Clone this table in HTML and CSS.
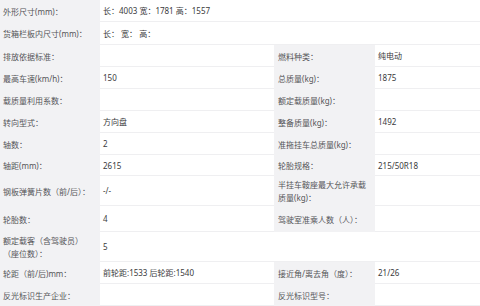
FILE: index.html
```html
<!DOCTYPE html>
<html lang="zh-CN">
<head>
<meta charset="utf-8">
<link rel="stylesheet" href="styles.css">
</head>
<body>
<div class="spec">
  <div class="lbl">外形尺寸(mm)：</div>
  <div class="val span3">长：4003 宽：1781 高：1557</div>

  <div class="lbl">货箱栏板内尺寸(mm)：</div>
  <div class="val span3">长：&nbsp;宽：&nbsp;高：</div>

  <div class="lbl">排放依据标准：</div>
  <div class="val"></div>
  <div class="lbl lbl-r">燃料种类：</div>
  <div class="val">纯电动</div>

  <div class="lbl">最高车速(km/h)：</div>
  <div class="val">150</div>
  <div class="lbl lbl-r">总质量(kg)：</div>
  <div class="val">1875</div>

  <div class="lbl">载质量利用系数：</div>
  <div class="val"></div>
  <div class="lbl lbl-r">额定载质量(kg)：</div>
  <div class="val"></div>

  <div class="lbl">转向型式：</div>
  <div class="val">方向盘</div>
  <div class="lbl lbl-r">整备质量(kg)：</div>
  <div class="val">1492</div>

  <div class="lbl">轴数：</div>
  <div class="val">2</div>
  <div class="lbl lbl-r">准拖挂车总质量(kg)：</div>
  <div class="val"></div>

  <div class="lbl">轴距(mm)：</div>
  <div class="val">2615</div>
  <div class="lbl lbl-r">轮胎规格：</div>
  <div class="val">215/50R18</div>

  <div class="lbl">钢板弹簧片数（前/后）：</div>
  <div class="val">-/-</div>
  <div class="lbl lbl-r">半挂车鞍座最大允许承载<br>质量(kg)：</div>
  <div class="val"></div>

  <div class="lbl">轮胎数：</div>
  <div class="val">4</div>
  <div class="lbl lbl-r">驾驶室准乘人数（人）：</div>
  <div class="val"></div>

  <div class="lbl">额定载客（含驾驶员）<br>（座位数）：</div>
  <div class="val">5</div>
  <div class="val span2"></div>

  <div class="lbl">轮距（前/后)mm：</div>
  <div class="val">前轮距:1533 后轮距:1540</div>
  <div class="lbl lbl-r">接近角/离去角（度）：</div>
  <div class="val">21/26</div>

  <div class="lbl">反光标识生产企业：</div>
  <div class="val"></div>
  <div class="lbl lbl-r">反光标识型号：</div>
  <div class="val"></div>
</div>
</body>
</html>
```

FILE: styles.css
```css
html, body {
  margin: 0;
  padding: 0;
  background: #ffffff;
}

.spec {
  width: 480px;
  height: 306px;
  display: grid;
  grid-template-columns: 100px 174px 101px 105px;
  grid-template-rows: 22px 23px 22px 22px 22px 22px 22px 21px 30px 26px 30px 22px 22px;
  font-family: "Noto Sans", "Noto Sans CJK SC", sans-serif;
  font-size: 8px;
  line-height: 13px;
  overflow: hidden;
}

.lbl,
.val {
  display: flex;
  align-items: center;
  box-sizing: border-box;
  white-space: nowrap;
}

.lbl {
  background: #f2f2f4;
  color: #555558;
  padding-left: 3px;
}

.lbl-r {
  padding-left: 4px;
}

.val {
  background: #ffffff;
  color: #3a3a3c;
  padding-left: 3px;
  border-bottom: 1px solid #efeff1;
}

.span3 {
  grid-column: span 3;
}

.span2 {
  grid-column: span 2;
}
```
